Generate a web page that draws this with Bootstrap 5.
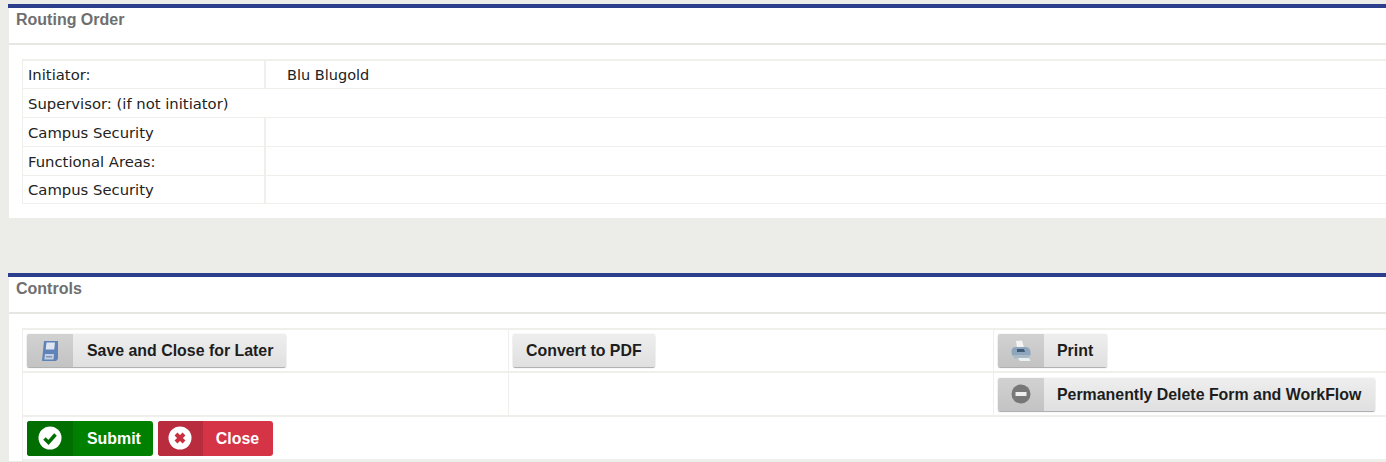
<!DOCTYPE html>
<html lang="en">
<head>
  <meta charset="UTF-8" />
  <title>Routing Order</title>
  <link href="https://cdn.jsdelivr.net/npm/bootstrap@5.3.0/dist/css/bootstrap.min.css" rel="stylesheet"/>
  <style>
    body {
      background: #ecece8;
      padding: 4px 0 0 8px;
      overflow: hidden;
    }
    .form-panel {
      border-top: 4px solid #2b3f8c;
      margin-right: -2px;
    }
    .form-panel + .form-panel { margin-top: 55px; }
    .panel-body { margin-left: 1px; background: #fff; }
    .panel-title {
      height: 37px;
      padding: 3px 0 0 7px;
      border-bottom: 2px solid #e6e6e3;
      font: bold 16px "Liberation Sans", Arial, sans-serif;
      color: #6f6f6f;
      line-height: 18px;
    }
    .panel-inner { padding: 14px 0 14px 13px; }
    .grid-table {
      table-layout: fixed;
      width: 100%;
      margin: 0;
      border-collapse: separate;
      border-spacing: 0;
      border-top: 2px solid #efefeb;
      border-left: 1px solid #efefeb;
      font: 14.8px "DejaVu Sans", Verdana, sans-serif;
      color: #222;
    }
    .grid-table td {
      height: 29px;
      padding: 0 0 0 5px;
      vertical-align: middle;
      border-bottom: 1px solid #efefeb;
      white-space: nowrap;
    }
    .grid-table tr:first-child td,
    .grid-table tr:last-child td { height: 28px; }
    .grid-table td + td { border-left: 2px solid #efefeb; }
    .value-cell { padding-left: 21px !important; font-size: 14.5px; }
    .name-col { width: 241px; }
    .controls-table td,
    .controls-table tr:last-child td {
      height: 44px;
      padding: 0 0 0 4px;
      border-bottom: 2px solid #efefeb;
    }
    .controls-table tr:first-child td { height: 43px; }
    .controls-table td + td { border-left: 1px solid #efefeb; }
    .col-a { width: 485px; }
    .col-b { width: 485px; }
    .icon-btn {
      display: inline-flex;
      align-items: stretch;
      height: 33px;
      padding: 0;
      border: 0;
      border-radius: 2px;
      background: linear-gradient(#eeeeee, #e0e0e0);
      box-shadow: 0 1px 1px #a9a9a9, 0 0 1px #bbb;
      font: bold 15.9px "Liberation Sans", Arial, sans-serif;
      color: #1d1d1d;
      vertical-align: middle;
    }
    .btn-icon {
      width: 46px;
      display: flex;
      align-items: center;
      justify-content: center;
      background: linear-gradient(#d2d2d2, #c3c3c3);
      border-radius: 2px 0 0 2px;
    }
    .btn-text {
      display: flex;
      align-items: center;
      padding: 1px 13px 0 14px;
    }
    .plain-btn .btn-text { padding: 1px 13px 0 13px; }
    .side-btn .btn-text { padding: 1px 14px 0 13px; }
    .action-btn {
      height: 35px;
      color: #fff;
      box-shadow: none;
      border-radius: 3px;
    }
    .submit-btn { background: #008000; }
    .submit-btn .btn-icon { background: #006e00; border-radius: 3px 0 0 3px; }
    .submit-btn .btn-text { padding: 1px 12px 0 14px; }
    .cancel-btn { background: #d53447; margin-left: 1px; }
    .cancel-btn .btn-icon { background: #b92c3d; border-radius: 3px 0 0 3px; width: 45px; }
    .cancel-btn .btn-text { padding: 1px 14px 0 13px; }
  </style>
</head>
<body>
  <div class="form-panel">
    <div class="panel-body">
      <div class="panel-title">Routing Order</div>
      <div class="panel-inner">
        <table class="grid-table">
          <colgroup><col class="name-col"><col></colgroup>
          <tr><td>Initiator:</td><td class="value-cell">Blu Blugold</td></tr>
          <tr><td colspan="2">Supervisor: (if not initiator)</td></tr>
          <tr><td>Campus Security</td><td></td></tr>
          <tr><td>Functional Areas:</td><td></td></tr>
          <tr><td>Campus Security</td><td></td></tr>
        </table>
      </div>
    </div>
  </div>

  <div class="form-panel">
    <div class="panel-body">
      <div class="panel-title">Controls</div>
      <div class="panel-inner pb-0">
        <table class="grid-table controls-table">
          <colgroup><col class="col-a"><col class="col-b"><col></colgroup>
          <tr>
            <td>
              <button class="icon-btn" type="button">
                <span class="btn-icon">
                  <svg width="18" height="22" viewBox="0 0 18 22"><path d="M3 1h14v18l-2 2H1z" fill="#5f83b8"/><path d="M5.500 2.500h8.500l-.8 7H4.700z" fill="#dfe6f0"/><path d="M4 14h9l-.5 5.500H3.300z" fill="#c3cfe0"/><path d="M5 16h6v1.500H5z" fill="#7f96b8"/></svg>
                </span>
                <span class="btn-text">Save and Close for Later</span>
              </button>
            </td>
            <td>
              <button class="icon-btn plain-btn" type="button"><span class="btn-text">Convert to PDF</span></button>
            </td>
            <td>
              <button class="icon-btn side-btn" type="button">
                <span class="btn-icon">
                  <svg width="22" height="22" viewBox="0 0 22 22"><path d="M6 1l6-.5 2 7H7z" fill="#f4f4f4"/><path d="M1.500 11c0-2.500 2-4 4-4h10c2.500 0 5 2 5 5v3.500H2z" fill="#8ea6bd"/><path d="M7 9h7l1 3H7z" fill="#3f5a75"/><path d="M3 15.500h17l-1 3H4z" fill="#aab9c6"/><path d="M8 18h11l1.500 3H10z" fill="#e8f2f4"/></svg>
                </span>
                <span class="btn-text">Print</span>
              </button>
            </td>
          </tr>
          <tr>
            <td></td>
            <td></td>
            <td>
              <button class="icon-btn side-btn" type="button">
                <span class="btn-icon">
                  <svg width="20" height="20" viewBox="0 0 20 20"><circle cx="10" cy="10" r="9.500" fill="#777"/><rect x="4.500" y="8" width="11" height="4" fill="#eee"/></svg>
                </span>
                <span class="btn-text">Permanently Delete Form and WorkFlow</span>
              </button>
            </td>
          </tr>
          <tr>
            <td colspan="3">
              <div class="d-flex gap-1">
                <button class="icon-btn action-btn submit-btn" type="button">
                  <span class="btn-icon">
                    <svg width="24" height="24" viewBox="0 0 24 24"><circle cx="12" cy="12" r="11.500" fill="#fff"/><path d="M6.500 12.500l4 4 7-8" fill="none" stroke="#006e00" stroke-width="3.500"/></svg>
                  </span>
                  <span class="btn-text">Submit</span>
                </button>
                <button class="icon-btn action-btn cancel-btn" type="button">
                  <span class="btn-icon">
                    <svg width="24" height="24" viewBox="0 0 24 24"><circle cx="12" cy="12" r="11.500" fill="#fff"/><path d="M8 8l8 8M16 8l-8 8" fill="none" stroke="#c9303f" stroke-width="4"/></svg>
                  </span>
                  <span class="btn-text">Close</span>
                </button>
              </div>
            </td>
          </tr>
        </table>
      </div>
    </div>
  </div>
  <script src="https://cdn.jsdelivr.net/npm/bootstrap@5.3.0/dist/js/bootstrap.bundle.min.js"></script>
</body>
</html>
